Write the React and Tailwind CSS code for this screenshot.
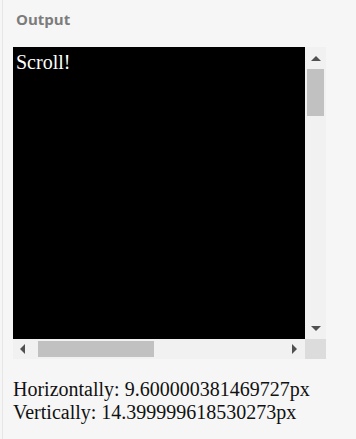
import React from 'react';

export default function App() {
  return (
    <div className="w-[356px] h-[439px] bg-[#f6f6f6] overflow-hidden">
      <div className="h-full ml-[2px] border-l border-[#e6e6e6] pl-[10px] pt-[8px]">
        <div className="pl-[3px] text-[15px] font-bold text-[#7c7c7c] leading-[22px] font-['Open_Sans',sans-serif]">Output</div>

        {/* scroll box drawn by hand */}
        <div className="mt-[17px] w-[313px] grid grid-cols-[292px_21px] grid-rows-[292px_20px]">
          <div className="bg-black text-white font-['Liberation_Serif',serif] text-[20px] leading-[22px] pt-[4px] pl-[3px]">Scroll!</div>

          {/* vertical scrollbar */}
          <div className="bg-[#f1f1f1] flex flex-col items-center">
            <div className="h-[22px] w-full flex items-center justify-center">
              <div className="w-0 h-0 border-l-[5px] border-r-[5px] border-b-[5px] border-l-transparent border-r-transparent border-b-[#505050]" />
            </div>
            <div className="w-[17px] h-[47px] bg-[#c1c1c1]" />
            <div className="flex-1" />
            <div className="h-[22px] w-full flex items-center justify-center">
              <div className="w-0 h-0 border-l-[5px] border-r-[5px] border-t-[5px] border-l-transparent border-r-transparent border-t-[#505050]" />
            </div>
          </div>

          {/* horizontal scrollbar */}
          <div className="bg-[#f1f1f1] flex items-center">
            <div className="w-[25px] h-full flex items-center pl-[7px]">
              <div className="w-0 h-0 border-t-[5px] border-b-[5px] border-r-[5px] border-t-transparent border-b-transparent border-r-[#505050]" />
            </div>
            <div className="w-[116px] h-[16px] bg-[#c1c1c1]" />
            <div className="flex-1" />
            <div className="w-[22px] h-full flex items-center justify-center">
              <div className="w-0 h-0 border-t-[5px] border-b-[5px] border-l-[5px] border-t-transparent border-b-transparent border-l-[#505050]" />
            </div>
          </div>
          <div className="bg-[#dcdcdc]" />
        </div>

        <div className="mt-[19px] font-['Liberation_Serif',serif] text-[20px] leading-[23px] text-[#111]">
          <div>Horizontally: 9.600000381469727px</div>
          <div>Vertically: 14.399999618530273px</div>
        </div>
      </div>
    </div>
  );
}
